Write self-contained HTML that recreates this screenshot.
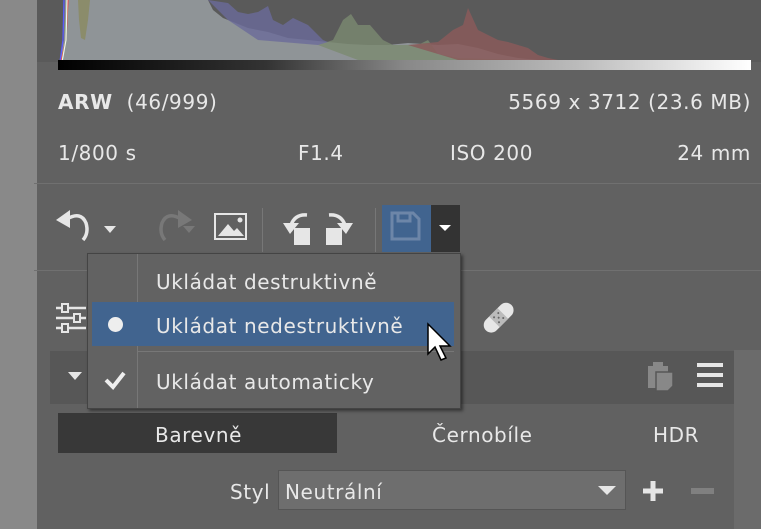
<!DOCTYPE html>
<html><head><meta charset="utf-8"><style>
*{margin:0;padding:0;box-sizing:border-box}
body{width:761px;height:529px;overflow:hidden;background:#616161;font-family:"DejaVu Sans","Liberation Sans",sans-serif;color:#e8e8e8;position:relative}
.a{position:absolute}
.t{position:absolute;font-size:20px;letter-spacing:0.6px;white-space:nowrap;line-height:24px}
</style></head><body>
<div class="a" style="left:0;top:0;width:37px;height:529px;background:#898989"></div>
<div class="a" style="left:37px;top:0;width:724px;height:62px;background:#5a5a5a"></div>
<svg class="a" style="left:58px;top:0" width="694" height="62">
<polygon fill="#8f9497" points="0,62 2,60 6,40 7,0 150,0 155,10 165,18 175,22 190,28 210,32 230,38 250,40 270,42 290,44 310,45 330,45 350,43 380,45 400,44 420,48 440,54 460,58 480,60 500,61 694,62"/>
<polygon fill="#7a8a70" opacity=".8" points="260,45 275,40 285,20 293,14 300,25 312,25 325,40 335,45 360,45 370,40 380,54 400,58 460,60 300,60"/>
<polygon fill="#8a5a5a" opacity=".85" points="350,45 380,42 395,30 405,25 410,8 420,30 430,35 440,40 450,42 460,45 470,48 480,55 490,58 500,60 400,60"/>
<polygon fill="#6a6a9a" opacity=".8" points="150,0 170,3 180,12 190,14 200,12 210,6 215,20 225,25 235,18 250,25 260,35 265,40 270,42 260,45 200,40 170,20"/>
<polygon fill="#8a8a60" opacity=".8" points="20,0 32,0 30,20 27,40 23,38 21,20"/>
<polyline fill="none" stroke="#5a5aff" stroke-width="1.3" points="2,62 5,40 6,0 M 20,0 22,30 25,40 28,30 32,0 M 150,0 170,3 180,12 190,14 200,12 210,6 215,20 225,25 235,18 250,25 260,38 300,40 330,50 345,58 360,60"/>
<polyline fill="none" stroke="#f04040" stroke-width="1.2" points="3,62 8,40 10,0 M 150,5 170,15 190,25 230,37 260,43 300,45 330,40 370,45 395,30 405,25 410,8 420,30 440,40 470,50 490,58 520,62"/>
<polyline fill="none" stroke="#40e040" stroke-width="1.2" points="4,62 8,40 9,0 M 150,0 180,15 200,20 230,35 260,44 285,20 293,14 300,25 312,25 318,28 325,40 335,45 360,52 380,57 410,60 440,61"/>
<polyline fill="none" stroke="#f0f0f0" stroke-width="1.2" points="4,62 8,40 9,0 M 150,0 170,12 200,20 230,38 260,44 290,40 300,20 305,15 315,25 325,25 340,30 360,45 380,52 400,55 430,60"/>
</svg>
<div class="a" style="left:58px;top:60px;width:693px;height:10px;background:linear-gradient(to right,#000,#333 30%,#888 50%,#bbb 75%,#fff)"></div>
<div class="t" style="left:58px;top:90px"><b>ARW</b>&nbsp;&nbsp;(46/999)</div>
<div class="t" style="right:10px;top:90px">5569 x 3712 (23.6 MB)</div>
<div class="t" style="left:58px;top:141px">1/800 s</div>
<div class="t" style="left:298px;top:141px">F1.4</div>
<div class="t" style="left:450px;top:141px">ISO 200</div>
<div class="t" style="right:10px;top:141px">24 mm</div>
<div class="a" style="left:34px;top:183px;width:727px;height:1px;background:#707070"></div>
<svg class="a" style="left:55px;top:205px" width="410" height="50">
<path d="M12 14 Q26 6 31 18 Q34 28 28 35" fill="none" stroke="#e6e6e6" stroke-width="3.5"/><polygon points="1,15 15,5 15,23" fill="#e6e6e6"/>
<polygon points="49,21 61,21 55,28" fill="#e6e6e6"/>
<path d="M126 14 Q112 6 107 18 Q104 28 110 35" fill="none" stroke="#787878" stroke-width="3.5"/><polygon points="137,15 123,5 123,23" fill="#787878"/>
<polygon points="128,21 140,21 134,28" fill="#787878"/>
<rect x="160" y="9" width="31" height="25" fill="none" stroke="#e6e6e6" stroke-width="2"/><polygon points="163,31 173,19 179,26 182,23 189,31" fill="#e6e6e6"/><circle cx="185" cy="15" r="2.5" fill="#e6e6e6"/>
<rect x="207" y="3" width="1" height="44" fill="#777"/>
<rect x="239" y="23" width="16" height="17" fill="#e6e6e6"/><path d="M252 10 Q240 9 236 20" fill="none" stroke="#e6e6e6" stroke-width="3.5"/><polygon points="228,18 244,18 235,29" fill="#e6e6e6"/>
<rect x="271" y="23" width="16" height="17" fill="#e6e6e6"/><path d="M274 10 Q286 9 290 20" fill="none" stroke="#e6e6e6" stroke-width="3.5"/><polygon points="282,18 298,18 291,29" fill="#e6e6e6"/>
<rect x="320" y="3" width="1" height="44" fill="#777"/>
<rect x="327" y="-1" width="49" height="48" fill="#41648f"/>
<rect x="376" y="-1" width="29" height="48" fill="#333"/>
<path d="M337 8 h21 l6 6 v20 h-27 z" fill="none" stroke="#6d86a8" stroke-width="3"/><rect x="343" y="8" width="12" height="8" fill="none" stroke="#6d86a8" stroke-width="3"/>
<polygon points="384,20 396,20 390,26" fill="#fff"/>
</svg>
<div class="a" style="left:34px;top:270px;width:727px;height:1px;background:#707070"></div>
<svg class="a" style="left:56px;top:303px" width="30" height="30"><g fill="none" stroke="#e6e6e6" stroke-width="2.5"><path d="M0 5h30M0 15h30M0 25h30"/></g><g fill="#616161" stroke="#e6e6e6" stroke-width="2"><rect x="6" y="1" width="6" height="8"/><rect x="18" y="11" width="6" height="8"/><rect x="6" y="21" width="6" height="8"/></g></svg>
<svg class="a" style="left:480px;top:299px" width="38" height="38"><g transform="rotate(-45 19 19)"><rect x="1" y="11" width="36" height="15" rx="7.5" fill="#e6e6e6"/><rect x="13" y="11" width="12" height="15" fill="#bbb"/><g fill="#666"><circle cx="16" cy="15" r="1"/><circle cx="19" cy="18.5" r="1"/><circle cx="22" cy="22" r="1"/><circle cx="22" cy="15" r="1"/><circle cx="16" cy="22" r="1"/></g></g></svg>
<div class="a" style="left:50px;top:351px;width:684px;height:53px;background:#575757"></div>
<div class="a" style="left:734px;top:350px;width:27px;height:179px;background:#6b6b6b"></div>
<svg class="a" style="left:68px;top:372px" width="14" height="9"><polygon points="0,0 14,0 7,8" fill="#e6e6e6"/></svg>
<svg class="a" style="left:646px;top:359px" width="32" height="34"><rect x="2" y="7" width="20" height="22" fill="#888"/><rect x="7" y="3" width="10" height="6" fill="#888"/><path d="M10 13h17v14l-5 5h-12z" fill="#888" stroke="#575757" stroke-width="1.5"/></svg>
<svg class="a" style="left:697px;top:362px" width="26" height="26"><path d="M0 3h26M0 13h26M0 23h26" stroke="#e6e6e6" stroke-width="4"/></svg>
<div class="a" style="left:58px;top:413px;width:279px;height:40px;background:#383838"></div>
<div class="t" style="left:155px;top:423px">Barevně</div>
<div class="t" style="left:432px;top:423px">Černobíle</div>
<div class="t" style="left:653px;top:423px">HDR</div>
<div class="t" style="left:230px;top:480px">Styl</div>
<div class="a" style="left:278px;top:470px;width:348px;height:40px;background:#6e6e6e;border:1px solid #555"></div>
<div class="t" style="left:285px;top:480px">Neutrální</div>
<svg class="a" style="left:598px;top:486px" width="18" height="10"><polygon points="0,0 18,0 9,9" fill="#e6e6e6"/></svg>
<svg class="a" style="left:641px;top:479px" width="24" height="24"><path d="M12 2v20M2 12h20" stroke="#e6e6e6" stroke-width="5"/></svg>
<div class="a" style="left:691px;top:488px;width:23px;height:6px;background:#808080"></div>
<div class="a" style="left:87px;top:253px;width:374px;height:156px;background:#626262;border:1px solid #444;box-shadow:2px 2px 3px rgba(0,0,0,.45)"></div>
<div class="a" style="left:137px;top:254px;width:1px;height:154px;background:#777"></div>
<div class="a" style="left:92px;top:302px;width:362px;height:44px;background:#41648f"></div>
<div class="a" style="left:137px;top:351px;width:317px;height:1px;background:#777"></div>
<div class="t" style="left:156px;top:270px">Ukládat destruktivně</div>
<div class="t" style="left:156px;top:314px">Ukládat nedestruktivně</div>
<div class="t" style="left:156px;top:370px">Ukládat automaticky</div>
<div class="a" style="left:108px;top:317px;width:15px;height:15px;border-radius:50%;background:#eee"></div>
<svg class="a" style="left:104px;top:370px" width="22" height="20"><path d="M2 10l7 7L20 3" fill="none" stroke="#eee" stroke-width="4"/></svg>
<svg class="a" style="left:426px;top:322px" width="30" height="42"><path d="M2 2v30l7-7 6 13 5-2-6-12h10z" fill="#fff" stroke="#000" stroke-width="1.5"/></svg>
</body></html>
